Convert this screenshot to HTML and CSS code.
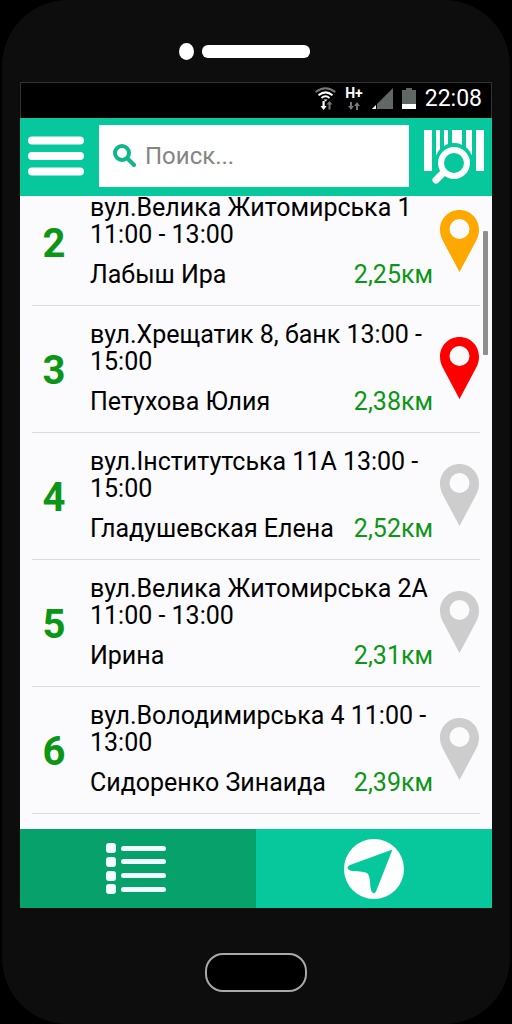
FILE: index.html
```html
<!DOCTYPE html>
<html lang="uk">
<head>
<meta charset="utf-8">
<meta name="viewport" content="width=device-width, initial-scale=1">
<title>Маршрут</title>
<link rel="stylesheet" href="styles.css">
</head>
<body>
<svg class="defs" aria-hidden="true">
  <symbol id="pin" viewBox="0 0 39 62">
    <path fill="currentColor" fill-rule="evenodd" d="M19.500 0C8.700 0 0 8.700 0 19.500C0 24 1 27 3 31L19.500 62L36 31C38 27 39 24 39 19.500C39 8.700 30.300 0 19.500 0ZM19.500 9a10 10 0 1 1 0 20a10 10 0 1 1 0-20Z"/>
  </symbol>
</svg>
<div class="phone">
  <div class="phone-top">
    <span class="camera"></span>
    <span class="speaker"></span>
  </div>

  <div class="screen">
    <div class="status">
      <svg width="21" height="23" viewBox="0 0 21 23" aria-hidden="true">
        <g fill="none" stroke-width="2">
          <path stroke="#777" d="M.7 5Q10.500-2.500 20.300 5"/>
          <path stroke="#fff" d="M3.500 8.200Q10.500 2.500 17.500 8.200M6.500 11Q10.500 7.500 14.500 11"/>
        </g>
        <path fill="#fff" d="M8.500 12.500h4l-2 2zM7.500 14h2.200v5h2L8.600 23l-3.100-4h2z"/>
        <path fill="#777" d="M13.500 22.500h2v-5h2L14.500 14l-3 3.500h2z"/>
      </svg>
      <span class="network">
        <span class="network-type">H+</span>
        <svg width="12" height="8" viewBox="0 0 12 8" aria-hidden="true">
          <path fill="#777" d="M2 0h2v4h2L3 8 0 4h2zM8 8h2V4h2L9 0 6 4h2z"/>
        </svg>
      </span>
      <svg width="21" height="21" viewBox="0 0 21 21" aria-hidden="true">
        <path fill="#5f6767" d="M21 0v21H0z"/>
        <path fill="#000" d="M4 15h1v6H4z"/>
        <path fill="#fff" d="M4 17v4H0z"/>
      </svg>
      <svg width="14" height="21" viewBox="0 0 14 21" aria-hidden="true">
        <path fill="#5f6767" d="M4 0h6v2h4v14H0V2h4z"/>
        <path fill="#fff" d="M0 16h14v5H0z"/>
      </svg>
      <time class="clock">22:08</time>
    </div>

    <header class="toolbar">
      <button class="icon-button" type="button" aria-label="Меню">
        <svg width="56" height="40" viewBox="0 0 56 40">
          <path stroke="#fff" stroke-width="8" stroke-linecap="round" d="M4 4.500h48M4 20h48M4 35.500h48"/>
        </svg>
      </button>
      <label class="search">
        <svg width="24" height="24" viewBox="0 0 24 24" aria-hidden="true">
          <g fill="none" stroke="#0fb68d" stroke-linecap="round">
            <circle cx="10" cy="9" r="7" stroke-width="4"/>
            <path stroke-width="4" d="M16 15l6 6"/>
          </g>
        </svg>
        <input class="search-input" type="text" placeholder="Поиск..." aria-label="Поиск">
      </label>
      <button class="icon-button" type="button" aria-label="Сканировать штрихкод">
        <svg width="60" height="55" viewBox="0 0 60 55">
          <path fill="#fff" d="M12 1h4v25h-4zM20 1h4v25h-4zM28 1h10v20H28zM42 1h6v25h-6z"/>
          <circle cx="30" cy="33" r="19" fill="#07c79c"/>
          <path fill="#fff" d="M0 1h8v41H0zM52 1h8v41h-8z"/>
          <circle cx="30" cy="34" r="13" fill="none" stroke="#fff" stroke-width="6"/>
          <path stroke="#fff" stroke-width="7" stroke-linecap="round" d="M19 44l-7 7"/>
        </svg>
      </button>
    </header>

    <main class="list-area">
      <ol class="stops">
        <li class="stop">
          <span class="number">2</span>
          <div class="details">
            <p class="address">вул.Велика Житомирська 1 11:00 - 13:00</p>
            <p class="person"><span>Лабыш Ира</span><span class="distance">2,25км</span></p>
          </div>
          <svg class="pin pin-amber" aria-hidden="true"><use href="#pin"/></svg>
        </li>
        <li class="stop">
          <span class="number">3</span>
          <div class="details">
            <p class="address">вул.Хрещатик 8, банк 13:00 - 15:00</p>
            <p class="person"><span>Петухова Юлия</span><span class="distance">2,38км</span></p>
          </div>
          <svg class="pin pin-red" aria-hidden="true"><use href="#pin"/></svg>
        </li>
        <li class="stop">
          <span class="number">4</span>
          <div class="details">
            <p class="address">вул.Інститутська 11А 13:00 - 15:00</p>
            <p class="person"><span>Гладушевская Елена</span><span class="distance">2,52км</span></p>
          </div>
          <svg class="pin" aria-hidden="true"><use href="#pin"/></svg>
        </li>
        <li class="stop">
          <span class="number">5</span>
          <div class="details">
            <p class="address">вул.Велика Житомирська 2А 11:00 - 13:00</p>
            <p class="person"><span>Ирина</span><span class="distance">2,31км</span></p>
          </div>
          <svg class="pin" aria-hidden="true"><use href="#pin"/></svg>
        </li>
        <li class="stop">
          <span class="number">6</span>
          <div class="details">
            <p class="address">вул.Володимирська 4 11:00 - 13:00</p>
            <p class="person"><span>Сидоренко Зинаида</span><span class="distance">2,39км</span></p>
          </div>
          <svg class="pin" aria-hidden="true"><use href="#pin"/></svg>
        </li>
      </ol>
      <span class="scroll-thumb"></span>
    </main>

    <nav class="tabs">
      <button class="tab tab-active" type="button" aria-label="Список">
        <svg width="60" height="52" viewBox="0 0 60 52">
          <g fill="#f0fffb">
            <rect x="0" y="0" width="10" height="10" rx="3"/>
            <rect x="0" y="14" width="10" height="10" rx="3"/>
            <rect x="0" y="28" width="10" height="10" rx="3"/>
            <rect x="0" y="41" width="10" height="10" rx="3"/>
            <rect x="15" y="3" width="45" height="5" rx="2.500"/>
            <rect x="15" y="16" width="45" height="5" rx="2.500"/>
            <rect x="15" y="30" width="45" height="5" rx="2.500"/>
            <rect x="15" y="44" width="45" height="5" rx="2.500"/>
          </g>
        </svg>
      </button>
      <button class="tab" type="button" aria-label="Карта">
        <svg width="60" height="60" viewBox="0 0 60 60">
          <circle cx="30" cy="30" r="30" fill="#fff"/>
          <path fill="#07c79c" d="M48.500 10.500L32 52.500Q30 56 27.500 52.500Q26 48 26 43Q25.500 36 23 34Q20 32.500 8 32Q4 31 3.500 29Q3.500 27 6 26Z"/>
        </svg>
      </button>
    </nav>
  </div>

  <div class="phone-bottom">
    <button class="home" type="button" aria-label="Домой"></button>
  </div>
</div>
</body>
</html>
```
FILE: styles.css
```css
* {
  box-sizing: border-box;
}

body {
  margin: 0;
  background: #000;
  font-family: Roboto, "Noto Sans", sans-serif;
  color: #000;
}

button {
  border: 0;
  padding: 0;
  background: none;
}

svg {
  display: block;
  flex: none;
}

.defs {
  display: none;
}

.phone {
  display: flex;
  flex-direction: column;
  height: 100vh;
  margin: 0 2px;
  padding: 0 18px;
  border-radius: 66px;
  background: #0d0d0e;
}

.phone-top {
  display: flex;
  align-items: center;
  justify-content: center;
  gap: 8px;
  height: 82px;
  padding: 20px 24px 0 0;
}

.camera {
  width: 15px;
  height: 17px;
  border-radius: 50%;
  background: #fff;
}

.speaker {
  width: 108px;
  height: 13px;
  border-radius: 6px;
  background: #fff;
}

.screen {
  display: flex;
  flex: 1;
  flex-direction: column;
  min-height: 0;
}

.status {
  display: flex;
  align-items: center;
  justify-content: flex-end;
  gap: 9px;
  height: 36px;
  padding: 0 9px 4px 0;
  border: 1px solid #333;
  border-bottom: 0;
  background: #000;
  color: #fff;
}

.network {
  display: flex;
  flex-direction: column;
  align-items: center;
  gap: 2px;
}

.network-type {
  font-size: 14px;
  font-weight: 700;
  line-height: 13px;
}

.clock {
  font-size: 23px;
  line-height: 28px;
}

.toolbar {
  display: flex;
  align-items: center;
  gap: 15px;
  height: 78px;
  padding: 0 8px 2px;
  background: #07c79c;
}

.icon-button {
  flex: none;
}

.search {
  display: flex;
  flex: 1;
  align-items: center;
  gap: 9px;
  min-width: 0;
  height: 62px;
  padding: 0 13px;
  background: #fff;
}

.search-input {
  flex: 1;
  min-width: 0;
  border: 0;
  padding: 0;
  outline: 0;
  background: none;
  font: 24px/28px Roboto, "Noto Sans", sans-serif;
  color: #000;
}

.search-input::placeholder {
  color: #858585;
  opacity: 1;
}

.list-area {
  position: relative;
  display: flex;
  flex: 1;
  flex-direction: column;
  justify-content: flex-end;
  min-height: 0;
  padding: 0 12px 15px;
  overflow: hidden;
  background: #fbfafc;
}

.stops {
  margin: 0;
  padding: 0;
  list-style: none;
}

.stop {
  display: flex;
  align-items: center;
  padding: 15px 1px 17px 0;
  border-bottom: 1px solid #dcdcde;
}

.number {
  flex: none;
  width: 44px;
  padding-top: 6px;
  font-size: 40px;
  font-weight: 700;
  line-height: 40px;
  text-align: center;
  color: #0c9616;
}

.details {
  flex: 1;
  min-width: 0;
  padding-left: 14px;
}

.address,
.person {
  margin: 0;
  font-size: 25px;
  line-height: 27px;
}

.person {
  display: flex;
  justify-content: space-between;
  margin-top: 13px;
  padding-right: 7px;
}

.distance {
  color: #0c9616;
}

.pin {
  width: 39px;
  height: 62px;
  color: #cdcdcd;
}

.pin-amber {
  color: #ffa800;
}

.pin-red {
  color: #f00;
}

.scroll-thumb {
  position: absolute;
  top: 35px;
  right: 4px;
  width: 5px;
  height: 124px;
  border-radius: 1px;
  background: #8f8f8f;
}

.tabs {
  display: grid;
  grid-template-columns: 1fr 1fr;
  height: 79px;
}

.tab {
  display: flex;
  align-items: center;
  justify-content: center;
  background: #07c79c;
}

.tab-active {
  padding-right: 4px;
  background: #07a16c;
}

.phone-bottom {
  display: flex;
  align-items: center;
  justify-content: center;
  height: 116px;
  padding-top: 12px;
}

.home {
  width: 102px;
  height: 39px;
  border: 2px solid #a8a8a8;
  border-radius: 18px;
  background: #000;
}
```
